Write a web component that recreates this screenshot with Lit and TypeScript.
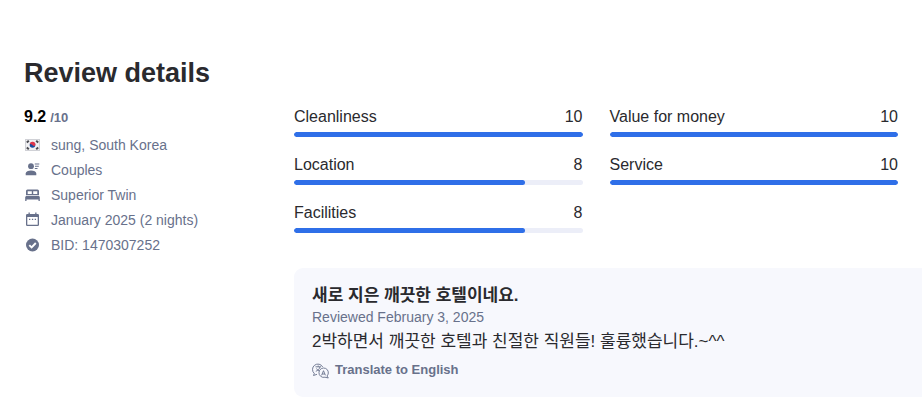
import { LitElement, html, css, svg } from "lit";
import { customElement, property } from "lit/decorators.js";
import { styleMap } from "lit/directives/style-map.js";

const icons = {
  flag: svg`
    <rect x="1.500" y="2.500" width="14" height="11" fill="#f0f0f2" stroke="#d0d1d6"/>
    <g stroke="#4b4c52" stroke-width="2">
      <path d="M2.800 5.500 4.800 3.800M12.200 3.800 14.200 5.500M2.800 10.500l2 1.700M12.200 12.200l2-1.700"/>
    </g>
    <circle cx="8.500" cy="8" r="2.800" fill="#164a9c"/>
    <path d="M5.700 7A2.800 2.800 0 0 1 11.300 8.300C10.500 9.400 9.300 9 8.500 8S6.300 7.600 5.700 7Z" fill="#e0354a"/>`,
  couple: svg`
    <circle cx="7" cy="4.200" r="2.900"/>
    <path d="M1.700 13.300v-1.800C1.700 9.400 4.200 8.400 7 8.400s5.300 1 5.300 3.100v1.800Z"/>
    <path d="M10.800 1.500h4.500v1h-4.500zM11 3.800h3.800v1H11zM10.800 6.100h2.700v1h-2.700z"/>`,
  bed: svg`
    <path fill-rule="evenodd" d="M3.500 2.500h10a1.500 1.500 0 0 1 1.500 1.500v4.300H2V4a1.500 1.500 0 0 1 1.500-1.500ZM3.700 4.200v2.900h4.100V4.200ZM9.200 4.200v2.900h4.100V4.200Z"/>
    <path d="M2 9h13l.8 1v4h-1.300v-1.500h-12V14H1.200v-4Z"/>`,
  calendar: svg`
    <path fill-rule="evenodd" d="M4.500.5h1.300V2h5.400V.5h1.300V2h1.200A1.300 1.300 0 0 1 15 3.300v9.400a1.300 1.300 0 0 1-1.300 1.300H3.300A1.300 1.300 0 0 1 2 12.700V3.300A1.300 1.300 0 0 1 3.300 2h1.200ZM3.300 5v7.700h10.400V5Z"/>
    <path d="M5 6.700h1.300V8H5zM7.900 6.700h1.300V8H7.900zM10.700 6.700H12V8h-1.300z"/>`,
  check: svg`
    <circle cx="8.500" cy="8" r="6.500"/>
    <path d="m5.300 8.200 2.300 2.300 4.200-4.500" fill="none" stroke="#fff" stroke-width="1.900"/>`,
  translate: svg`
    <g fill="none" stroke="currentColor" stroke-width="0.900">
      <path d="M2.300 11.500A5.400 5.400 0 1 1 10.700 5M2.300 11.500 1.500 13.500 5 12.300"/>
      <path d="M15 14A4.700 4.700 0 1 0 13 15.200L16.300 16Z"/>
      <path d="M3.500 4.800h5.500M6.200 3.500v1.300M8 4.800C7.500 7 6 8.500 3.800 9.300M4.500 6.500C5 7.500 5.800 8.300 7 9"/>
      <path d="m9.600 13.300 1.900-4.600 1.900 4.600M10.200 12h2.600"/>
    </g>`,
};

@customElement("score-bar")
class ScoreBar extends LitElement {
  @property() label = "";
  @property({ type: Number }) score = 0;

  static styles = css`
    :host { display: block; }
    .head {
      display: flex;
      justify-content: space-between;
      font-size: 16px;
      line-height: 26px;
      color: #2a2a2e;
    }
    .track {
      height: 5px;
      margin-top: 2px;
      border-radius: 3px;
      background: #eceef8;
      overflow: hidden;
    }
    .fill { height: 100%; border-radius: 3px; background: #2f6fe8; }
  `;

  render() {
    return html`
      <div class="head"><span>${this.label}</span><span>${this.score}</span></div>
      <div class="track">
        <div class="fill" style=${styleMap({ width: `${this.score * 10}%` })}></div>
      </div>`;
  }
}

@customElement("app-root")
class AppRoot extends LitElement {
  static styles = css`
    :host {
      display: block;
      background: #fff;
      color: #2a2a2e;
      font-family: "Liberation Sans", "Noto Sans CJK KR", sans-serif;
    }
    .page { padding: 56px 0 18px 24px; }
    .title { margin: 0; font-size: 27px; line-height: 34px; font-weight: 700; }
    .columns {
      display: grid;
      grid-template-columns: 242px minmax(0, 1fr);
      column-gap: 28px;
      margin-top: 14px;
    }
    .rating {
      margin: 0;
      display: flex;
      align-items: baseline;
      gap: 4px;
      line-height: 26px;
      font-weight: 700;
    }
    .value { font-size: 16px; color: #000; }
    .scale { font-size: 13px; color: #68718b; }
    .facts {
      display: grid;
      gap: 5px;
      margin: 4px 0 0;
      padding: 0;
      list-style: none;
      font-size: 14px;
      line-height: 20px;
      color: #68718b;
    }
    .fact { display: flex; align-items: center; gap: 10px; }
    .icon { width: 17px; height: 17px; flex: none; fill: currentColor; }
    .scores {
      display: grid;
      grid-template-columns: 1fr 1fr;
      gap: 15px 27px;
      margin-right: 24px;
    }
    .comment {
      margin-top: 35px;
      padding: 17px 18px;
      border-radius: 9px 0 0 9px;
      background: #f7f8fd;
    }
    .headline { margin: 0; font-size: 17px; line-height: 22px; font-weight: 700; }
    .date { margin: 0; font-size: 14px; line-height: 20px; color: #68718b; }
    .text { margin: 0; font-size: 17px; line-height: 30px; }
    .translate {
      display: flex;
      align-items: center;
      gap: 6px;
      margin-top: 3px;
      padding: 0;
      border: 0;
      background: none;
      font: 700 13px/20px "Liberation Sans", sans-serif;
      color: #68718b;
      cursor: pointer;
    }
  `;

  private facts = [
    { icon: icons.flag, text: "sung, South Korea" },
    { icon: icons.couple, text: "Couples" },
    { icon: icons.bed, text: "Superior Twin" },
    { icon: icons.calendar, text: "January 2025 (2 nights)" },
    { icon: icons.check, text: "BID: 1470307252" },
  ];

  private scores = [
    { label: "Cleanliness", score: 10 },
    { label: "Value for money", score: 10 },
    { label: "Location", score: 8 },
    { label: "Service", score: 10 },
    { label: "Facilities", score: 8 },
  ];

  render() {
    return html`
      <main class="page">
        <h1 class="title">Review details</h1>
        <div class="columns">
          <section>
            <p class="rating"><span class="value">9.2</span><span class="scale">/10</span></p>
            <ul class="facts">
              ${this.facts.map(
                (f) => html`<li class="fact">
                  <svg class="icon" viewBox="0 0 17 17" aria-hidden="true">${f.icon}</svg>
                  <span>${f.text}</span>
                </li>`
              )}
            </ul>
          </section>
          <section>
            <div class="scores">
              ${this.scores.map(
                (s) => html`<score-bar .label=${s.label} .score=${s.score}></score-bar>`
              )}
            </div>
            <article class="comment" lang="ko">
              <h2 class="headline">새로 지은 깨끗한 호텔이네요.</h2>
              <p class="date" lang="en">Reviewed February 3, 2025</p>
              <p class="text">2박하면서 깨끗한 호텔과 친절한 직원들! 훌륭했습니다.~^^</p>
              <button class="translate" type="button" lang="en">
                <svg class="icon" viewBox="0 0 17 17" aria-hidden="true">${icons.translate}</svg>
                Translate to English
              </button>
            </article>
          </section>
        </div>
      </main>`;
  }
}
